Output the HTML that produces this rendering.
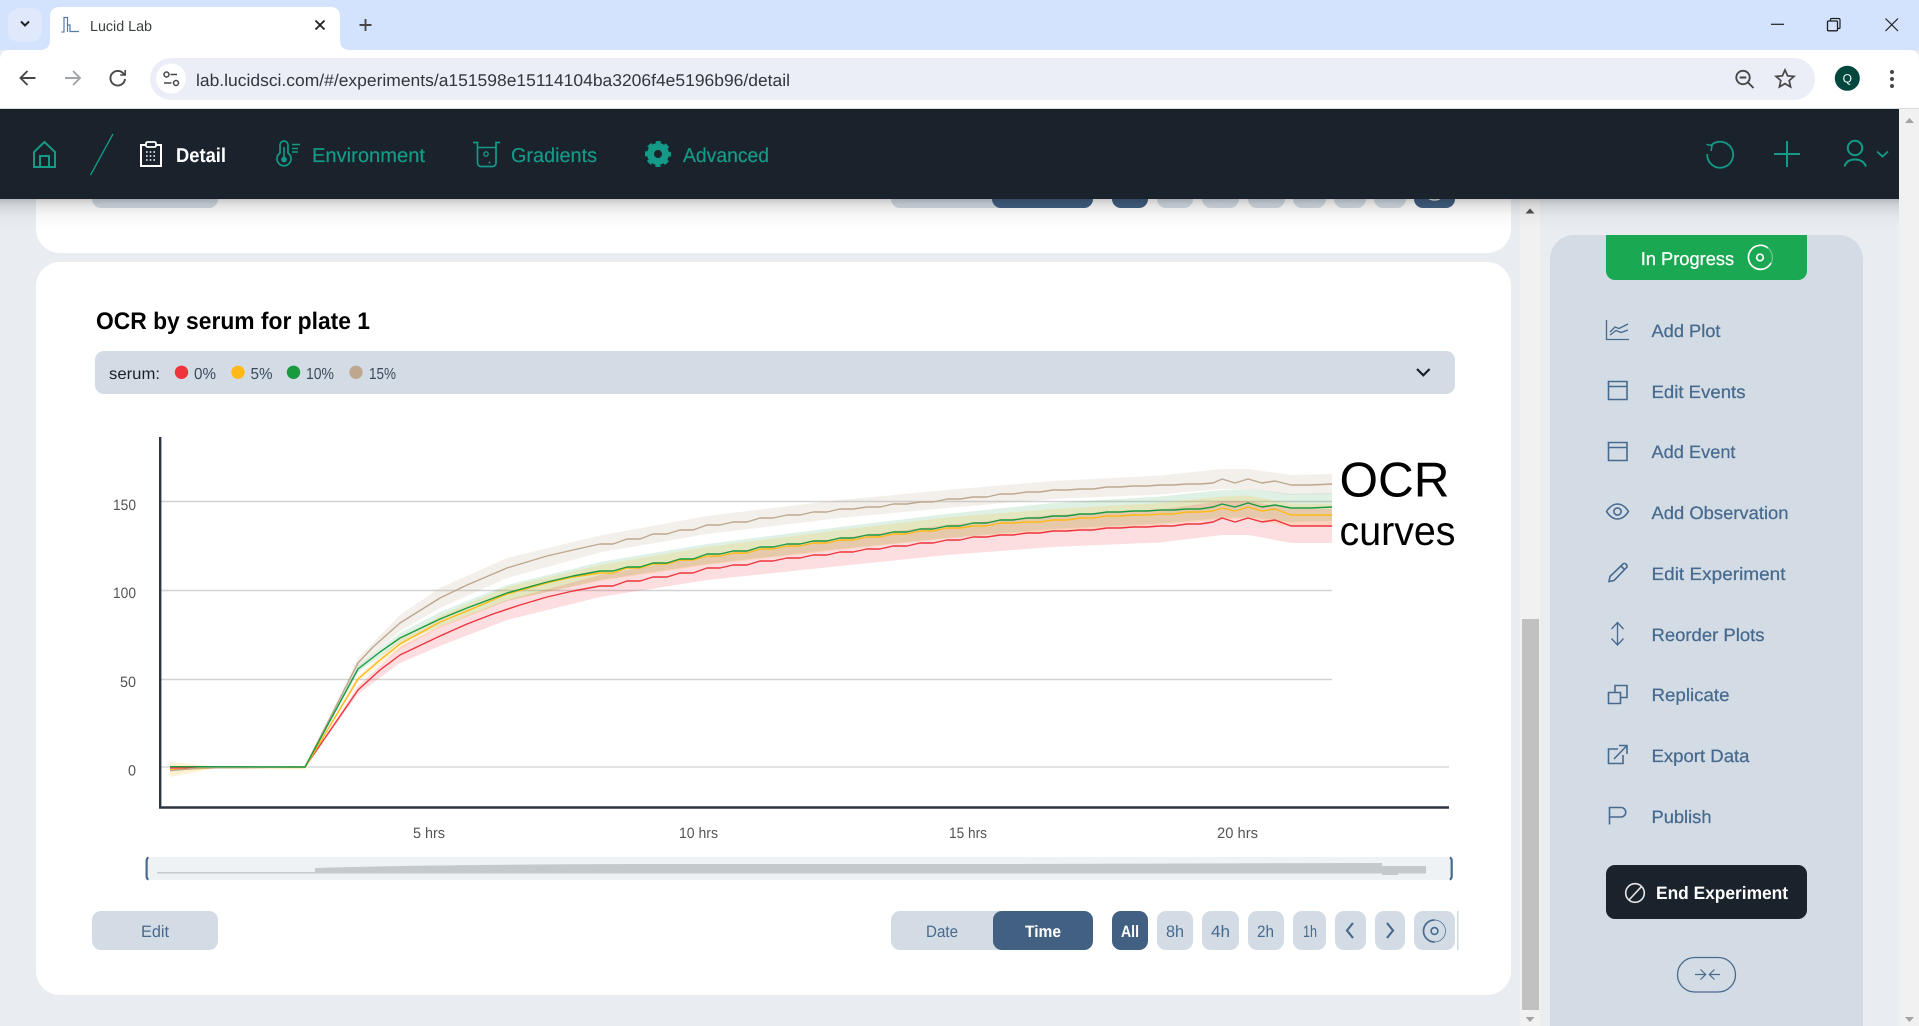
<!DOCTYPE html>
<html lang="en">
<head>
<meta charset="utf-8">
<title>Lucid Lab</title>
<style>
html,body{margin:0;padding:0;background:#e9edf2;overflow:hidden}
svg{display:block}
text{font-family:"Liberation Sans",Arial,sans-serif;text-rendering:geometricPrecision}
.side{font-size:18px;fill:#476a8e;stroke:#476a8e;stroke-width:.25}
.nav{font-size:20px;fill:#149a87;stroke:#149a87;stroke-width:.2}
.btn{font-size:16.5px;fill:#476a8e}
.ax{font-size:15px;fill:#555}
.lg{font-size:16px;fill:#3b4a5c}
.ic{fill:none;stroke:#476a8e;stroke-width:1.6}
.tl{fill:none;stroke:#149a87;stroke-width:2}
.ch{fill:none;stroke:#474747;stroke-width:1.9}
</style>
</head>
<body>
<svg xmlns="http://www.w3.org/2000/svg" width="1919" height="1026" viewBox="0 0 1919 1026">
<defs>
<linearGradient id="sh" x1="0" y1="0" x2="0" y2="1">
<stop offset="0" stop-color="#000" stop-opacity=".22"/>
<stop offset=".2" stop-color="#000" stop-opacity=".11"/>
<stop offset=".55" stop-color="#000" stop-opacity=".03"/>
<stop offset="1" stop-color="#000" stop-opacity="0"/>
</linearGradient>
</defs>

<!-- page -->
<rect width="1919" height="1026" fill="#e9edf2"/>

<!-- first card -->
<rect x="36" y="120" width="1475" height="133" rx="24" fill="#fff"/>
<rect x="92" y="169" width="126" height="39" rx="9" fill="#d3dce5"/>
<rect x="891" y="169" width="202" height="39" rx="9" fill="#d3dce5"/>
<rect x="992" y="169" width="101" height="39" rx="9" fill="#416082"/>
<rect x="1112" y="169" width="36" height="39" rx="9" fill="#416082"/>
<rect x="1157" y="169" width="36" height="39" rx="9" fill="#d3dce5"/>
<rect x="1202" y="169" width="37" height="39" rx="9" fill="#d3dce5"/>
<rect x="1248" y="169" width="37" height="39" rx="9" fill="#d3dce5"/>
<rect x="1293" y="169" width="33" height="39" rx="9" fill="#d3dce5"/>
<rect x="1334" y="169" width="32" height="39" rx="9" fill="#d3dce5"/>
<rect x="1374" y="169" width="32" height="39" rx="9" fill="#d3dce5"/>
<rect x="1414" y="169" width="41" height="39" rx="9" fill="#416082"/>
<circle cx="1434.5" cy="189" r="11" fill="none" stroke="#e8e8e8" stroke-width="1.5"/>

<!-- second card -->
<rect x="36" y="262" width="1475" height="733" rx="24" fill="#fff"/>
<text x="96" y="329" font-size="24" font-weight="700" fill="#000" textLength="274" lengthAdjust="spacingAndGlyphs">OCR by serum for plate 1</text>

<!-- legend -->
<rect x="95" y="351" width="1360" height="43" rx="9" fill="#d3dce5"/>
<text x="109" y="379" font-size="16" fill="#1a222c" textLength="51" lengthAdjust="spacingAndGlyphs">serum:</text>
<circle cx="181.5" cy="372.3" r="6.7" fill="#f0343c"/>
<text class="lg" x="194" y="379" textLength="22" lengthAdjust="spacingAndGlyphs">0%</text>
<circle cx="238" cy="372.3" r="6.7" fill="#ffb91a"/>
<text class="lg" x="250.5" y="379" textLength="22" lengthAdjust="spacingAndGlyphs">5%</text>
<circle cx="293.5" cy="372.3" r="6.7" fill="#1a9a3f"/>
<text class="lg" x="306" y="379" textLength="28" lengthAdjust="spacingAndGlyphs">10%</text>
<circle cx="356" cy="372.3" r="6.7" fill="#bda88f"/>
<text class="lg" x="369" y="379" textLength="27" lengthAdjust="spacingAndGlyphs">15%</text>
<path d="M1417 369l6.3 6.3 6.3-6.3" fill="none" stroke="#1a222c" stroke-width="2.2"/>

<!-- chart grid -->
<path d="M161 501.5H1332M161 590.5H1332M161 679.5H1332" stroke="#d2d2d2" stroke-width="1.4" fill="none"/>
<path d="M161 767H1449" stroke="#dcdcdc" stroke-width="1.6" fill="none"/>

<!-- bands -->
<polygon fill="#ffb91a" fill-opacity=".2" points="170,762 215,766.5 305,767 215,768 170,777"/>
<polygon fill="#bda88f" fill-opacity=".18" points="305,767 358,658 400,615 440,588 507,558 600,535.5 707,516 840,500 947,490 1053,481 1160,475.5 1222,469 1248,469 1291,475 1332,474 1332,494 1291,495 1248,489 1222,489 1160,494.5 1053,499 947,508 840,518 707,534 600,552.5 507,578 440,608 400,631 358,668"/>
<polygon fill="#1a9a3f" fill-opacity=".14" points="305,767 358,666 400,633 440,612 507,585 600,562 707,544 840,527 947,514 1053,503 1160,496.5 1222,490 1248,489 1291,494 1332,493 1332,521 1291,522 1248,517 1222,518 1160,523.5 1053,529 947,538 840,549 707,564 600,580 507,601 440,626 400,643 358,672"/>
<polygon fill="#ffb91a" fill-opacity=".18" points="305,767 358,676 400,639 440,616 507,587 600,565 707,547 840,530 947,517.5 1053,509 1160,503 1222,496.5 1248,495.5 1291,503.5 1332,503.5 1332,526.5 1291,526.5 1248,518.5 1222,519.5 1160,525 1053,531 947,538.5 840,550 707,565 600,581 507,601 440,628 400,649 358,682"/>
<polygon fill="#f0343c" fill-opacity=".16" points="305,767 358,686 400,647 440,626 507,600 600,575 707,556 840,538 947,525 1053,515 1160,509.5 1222,501 1248,501 1291,509 1332,509 1332,543 1291,543 1248,535 1222,535 1160,542.5 1053,547 947,555 840,566 707,580 600,597 507,620 440,646 400,663 358,694"/>

<!-- lines -->
<g fill="none" stroke-width="1.4" stroke-linejoin="round">
<path stroke="#f0343c" d="M170 768L305 767L358 690L380 670L400 655L440 636L467 624L493 614L520 605L547 597L573 591L600 586H613L627 581H640L653 577H667L680 573H693L707 568H720L733 565H747L760 561H773L787 558H800L813 555H827L840 552H853L867 549H880L893 546H907L920 543H933L947 540H960L973 537H987L1000 535H1013L1027 533H1040L1053 531H1067L1080 530H1093L1107 528H1120L1133 527H1147L1160 526H1173L1187 524H1200L1213 522L1222 518L1235 522L1248 518L1262 522L1275 520L1291 526H1311L1332 526"/>
<path stroke="#ffb91a" d="M170 770L220 767.5L305 767.5L358 679L380 660L400 644L440 622L467 611L507 594L547 583L573 577L600 573H613L627 568H640L653 564H667L680 560H693L707 556H720L733 553H747L760 549H773L787 546H800L813 543H827L840 540H853L867 537H880L893 534H907L920 531H933L947 528H960L973 526H987L1000 523H1013L1027 522H1040L1053 520H1067L1080 518H1093L1107 516H1120L1133 515H1147L1160 514H1173L1187 512H1200L1213 511L1222 508L1235 511L1248 507L1262 511L1275 509L1291 515H1311L1332 515"/>
<path stroke="#bda88f" d="M170 770.7L200 768L305 767L358 663L373 647L400 623L440 598L467 585L507 568L547 556L573 550L600 544H613L627 539H640L653 534H667L680 530H693L707 525H720L733 522H747L760 518H773L787 515H800L813 512H827L840 509H853L867 507H880L893 504H907L920 502H933L947 499H960L973 497H987L1000 494H1013L1027 492H1040L1053 490H1067L1080 489H1093L1107 487H1120L1133 486H1147L1160 485H1173L1187 484H1200L1213 483L1222 479L1235 483L1248 479L1262 483L1275 481L1291 485H1311L1332 484"/>
<path stroke="#1a9a3f" d="M170 766.7H200L305 767L358 669L380 652L400 638L440 619L467 608L507 593L547 582L573 576L600 571H613L627 567H640L653 563H667L680 559H693L707 554H720L733 551H747L760 547H773L787 544H800L813 541H827L840 538H853L867 535H880L893 532H907L920 529H933L947 526H960L973 523H987L1000 520H1013L1027 518H1040L1053 516H1067L1080 514H1093L1107 512H1120L1133 511H1147L1160 510H1173L1187 509H1200L1213 507L1222 504L1235 507L1248 503L1262 507L1275 505L1291 508H1311L1332 507"/>
</g>

<!-- axes -->
<path d="M160.2 437V807.5H1449" fill="none" stroke="#2b3543" stroke-width="2.4"/>
<text class="ax" x="113" y="510" textLength="23" lengthAdjust="spacingAndGlyphs">150</text>
<text class="ax" x="113" y="598" textLength="23" lengthAdjust="spacingAndGlyphs">100</text>
<text class="ax" x="120" y="687" textLength="16" lengthAdjust="spacingAndGlyphs">50</text>
<text class="ax" x="128" y="775.5" textLength="8" lengthAdjust="spacingAndGlyphs">0</text>
<text class="ax" x="413" y="838" textLength="32" lengthAdjust="spacingAndGlyphs">5 hrs</text>
<text class="ax" x="679" y="838" textLength="39" lengthAdjust="spacingAndGlyphs">10 hrs</text>
<text class="ax" x="949" y="838" textLength="38" lengthAdjust="spacingAndGlyphs">15 hrs</text>
<text class="ax" x="1217" y="838" textLength="41" lengthAdjust="spacingAndGlyphs">20 hrs</text>

<!-- annotation -->
<text x="1339.5" y="496.5" font-size="49" fill="#000" textLength="110" lengthAdjust="spacingAndGlyphs">OCR</text>
<text x="1339.5" y="545" font-size="41" fill="#000" textLength="116" lengthAdjust="spacingAndGlyphs">curves</text>

<!-- brush -->
<rect x="147" y="857" width="1304" height="23" fill="#eef2f5"/>
<path d="M157 872H315V868C400 865.5 500 864.5 640 864H1000L1382 863V866H1426V873.5H1398V875H1382V873.5H315L157 873.5Z" fill="#c4c9cc"/>
<path d="M148.5 857.5C147 858 146.6 859 146.6 861V876C146.6 878 147 879 148.5 879.5" fill="none" stroke="#476a8e" stroke-width="2.2"/>
<path d="M1449.8 857.5C1451.3 858 1451.7 859 1451.7 861V876C1451.7 878 1451.3 879 1449.8 879.5" fill="none" stroke="#476a8e" stroke-width="2.2"/>

<!-- bottom controls -->
<rect x="92" y="911" width="126" height="39" rx="9" fill="#d3dce5"/>
<text class="btn" x="141" y="937" textLength="28" lengthAdjust="spacingAndGlyphs">Edit</text>
<rect x="891" y="911" width="202" height="39" rx="9" fill="#d3dce5"/>
<rect x="993" y="911" width="100" height="39" rx="9" fill="#416082"/>
<text class="btn" x="926" y="937" textLength="32" lengthAdjust="spacingAndGlyphs">Date</text>
<text class="btn" x="1025" y="937" font-weight="700" style="fill:#fff" textLength="36" lengthAdjust="spacingAndGlyphs">Time</text>
<rect x="1112" y="911" width="36" height="39" rx="9" fill="#416082"/>
<text class="btn" x="1121" y="937" font-weight="700" style="fill:#fff" textLength="18" lengthAdjust="spacingAndGlyphs">All</text>
<rect x="1157" y="911" width="36" height="39" rx="9" fill="#d3dce5"/>
<text class="btn" x="1166" y="937" textLength="18" lengthAdjust="spacingAndGlyphs">8h</text>
<rect x="1202" y="911" width="37" height="39" rx="9" fill="#d3dce5"/>
<text class="btn" x="1211" y="937" textLength="19" lengthAdjust="spacingAndGlyphs">4h</text>
<rect x="1248" y="911" width="36" height="39" rx="9" fill="#d3dce5"/>
<text class="btn" x="1257" y="937" textLength="17" lengthAdjust="spacingAndGlyphs">2h</text>
<rect x="1293" y="911" width="33" height="39" rx="9" fill="#d3dce5"/>
<text class="btn" x="1303" y="937" textLength="14" lengthAdjust="spacingAndGlyphs">1h</text>
<rect x="1335" y="911" width="31" height="39" rx="9" fill="#d3dce5"/>
<path d="M1353 923l-6 7.5 6 7.5" fill="none" stroke="#476a8e" stroke-width="2.2"/>
<rect x="1375" y="911" width="30" height="39" rx="9" fill="#d3dce5"/>
<path d="M1387 923l6 7.5-6 7.5" fill="none" stroke="#476a8e" stroke-width="2.2"/>
<rect x="1414" y="911" width="41" height="39" rx="9" fill="#d3dce5"/>
<path d="M1434.5 920A11 11 0 0 0 1434.5 942" fill="none" stroke="#476a8e" stroke-width="1.7"/>
<path d="M1434.5 942A11 11 0 0 0 1434.5 920" fill="none" stroke="#476a8e" stroke-width=".7"/>
<circle cx="1434.5" cy="931" r="3.4" fill="none" stroke="#476a8e" stroke-width="1.6"/>
<rect x="1457" y="911" width="1.6" height="39" fill="#d3dce5"/>

<!-- inner scrollbar -->
<rect x="1520" y="199" width="20" height="827" fill="#f1f1f1"/>
<rect x="1522" y="619" width="17" height="391" fill="#c1c1c1"/>
<polygon points="1525.5,213.5 1534.5,213.5 1530,208.5" fill="#505050"/>
<polygon points="1525.5,1017 1534.5,1017 1530,1022" fill="#a3a3a3"/>

<!-- sidebar -->
<path d="M1550 1026V259A24 24 0 0 1 1574 235H1839A24 24 0 0 1 1863 259V1026Z" fill="#d3dce5"/>
<path d="M1606 235H1807V271A9 9 0 0 1 1798 280H1615A9 9 0 0 1 1606 271Z" fill="#1aa952"/>
<text x="1640.7" y="265" font-size="18.5" fill="#fff" stroke="#fff" stroke-width=".25" textLength="93.5" lengthAdjust="spacingAndGlyphs">In Progress</text>
<path d="M1768 248A12 12 0 1 0 1771 263" fill="none" stroke="#fff" stroke-width="1.7"/>
<path d="M1768 248A12 12 0 0 1 1771 263" fill="none" stroke="#fff" stroke-opacity=".35" stroke-width="1.3"/>
<circle cx="1760" cy="257.5" r="3.3" fill="none" stroke="#fff" stroke-width="1.7"/>

<text class="side" x="1651.5" y="337" textLength="69" lengthAdjust="spacingAndGlyphs">Add Plot</text>
<text class="side" x="1651.5" y="398" textLength="94" lengthAdjust="spacingAndGlyphs">Edit Events</text>
<text class="side" x="1651.5" y="458" textLength="84" lengthAdjust="spacingAndGlyphs">Add Event</text>
<text class="side" x="1651.5" y="519" textLength="137" lengthAdjust="spacingAndGlyphs">Add Observation</text>
<text class="side" x="1651.5" y="580" textLength="134" lengthAdjust="spacingAndGlyphs">Edit Experiment</text>
<text class="side" x="1651.5" y="641" textLength="113" lengthAdjust="spacingAndGlyphs">Reorder Plots</text>
<text class="side" x="1651.5" y="701" textLength="78" lengthAdjust="spacingAndGlyphs">Replicate</text>
<text class="side" x="1651.5" y="762" textLength="98" lengthAdjust="spacingAndGlyphs">Export Data</text>
<text class="side" x="1651.5" y="823" textLength="60" lengthAdjust="spacingAndGlyphs">Publish</text>

<path class="ic" style="stroke-width:1.3" d="M1606.5 320V339.5H1629M1610 332L1615 327L1619 328.5L1628 324M1610 335L1616 330.5L1621 332.5L1628 330"/>
<path class="ic" d="M1608.5 381.5H1627V399.5H1608.5ZM1608.5 386.5H1627"/>
<path class="ic" d="M1608.5 442.5H1627V460.5H1608.5ZM1608.5 447.5H1627"/>
<path class="ic" d="M1606.5 511.5C1610 506 1613.5 504 1617.5 504S1625 506 1628.5 511.5C1625 517 1621.5 519 1617.5 519S1610 517 1606.5 511.5Z"/>
<circle class="ic" cx="1617.5" cy="511.5" r="3.6"/>
<path class="ic" d="M1609 581.5L1610 576.5L1623 564A2 2 0 0 1 1625.8 564L1626.5 564.8A2 2 0 0 1 1626.5 567.6L1614 580.5ZM1621 566L1624.8 569.8"/>
<path class="ic" style="stroke-width:1.3" d="M1617.5 623V644M1611.5 629L1617.5 622.5L1623.5 629M1611.5 638.5L1617.5 645L1623.5 638.5"/>
<path class="ic" d="M1608.5 692.5H1620.5V703.5H1608.5ZM1615 692V685.5H1627V697.5H1620.5"/>
<path class="ic" d="M1618 749H1608.5V763.5H1623V755M1614 759L1626.5 746M1619 745.5H1627V754"/>
<path class="ic" d="M1609.5 824.5V807.5H1621A4.7 4.7 0 0 1 1621 817H1609.5"/>

<rect x="1606" y="865" width="201" height="54" rx="9" fill="#1a222c"/>
<circle cx="1635" cy="893" r="9.3" fill="none" stroke="#e6e6e6" stroke-width="1.6"/>
<path d="M1629 900L1641.5 886.5" stroke="#e6e6e6" stroke-width="1.6"/>
<text x="1656" y="899" font-size="18" font-weight="700" fill="#fff" textLength="132" lengthAdjust="spacingAndGlyphs">End Experiment</text>

<rect x="1677.5" y="957.5" width="58" height="34.5" rx="17.2" fill="none" stroke="#476a8e" stroke-width="1.3"/>
<path d="M1695 974.5H1705.7M1700.5 969.5L1705.7 974.5L1700.5 979.5M1720 974.5H1709.3M1714.5 969.5L1709.3 974.5L1714.5 979.5" fill="none" stroke="#476a8e" stroke-width="1.2"/>

<!-- main scrollbar -->
<rect x="1899" y="109" width="20" height="917" fill="#f1f1f1"/>
<polygon points="1905,123 1914,123 1909.5,118" fill="#a3a3a3"/>
<polygon points="1905,1017 1914,1017 1909.5,1022" fill="#a3a3a3"/>

<!-- header shadow -->
<rect x="0" y="199" width="1899" height="30" fill="url(#sh)"/>

<!-- header -->
<rect x="0" y="109" width="1899" height="90" fill="#1a222c"/>
<path class="tl" d="M34 167V152L44.5 142L55 152V167ZM40 167V156H49V167"/>
<path d="M113 134L90.5 175" stroke="#149a87" stroke-width="1.3" fill="none"/>

<path d="M146 145H141V166H161V145H156" fill="none" stroke="#fff" stroke-width="2"/>
<rect x="146" y="142" width="10" height="5" rx="1.5" fill="none" stroke="#fff" stroke-width="1.8"/>
<path d="M146 152H156M146 156H156M146 160H156" stroke="#fff" stroke-width="1.6" stroke-dasharray="1.6 2.1" fill="none"/>
<text x="176" y="162" font-size="20" font-weight="700" fill="#fff" textLength="50" lengthAdjust="spacingAndGlyphs">Detail</text>

<path class="tl" style="stroke-width:1.7" d="M280 153V145A4 4 0 0 1 288 145V153A7 7 0 1 1 280 153Z"/>
<circle cx="284" cy="159.5" r="2.8" fill="#149a87"/>
<path d="M284 158V147" stroke="#149a87" stroke-width="1.6"/>
<path d="M292 144.5H300M292 148.5H298M292 152H298" stroke="#149a87" stroke-width="1.4" fill="none"/>
<text class="nav" x="312" y="162" textLength="113" lengthAdjust="spacingAndGlyphs">Environment</text>

<path class="tl" style="stroke-width:1.7" d="M473 142.5H477.5V163A3.5 3.5 0 0 0 481 166.5H492.5A3.5 3.5 0 0 0 496 163V142.5H500"/>
<path d="M478 147.5H495.5" stroke="#149a87" stroke-width="1.6" fill="none"/>
<circle cx="486" cy="154" r="2.2" fill="none" stroke="#149a87" stroke-width="1.3"/>
<circle cx="489.5" cy="162.5" r="1" fill="#149a87"/>
<text class="nav" x="511" y="162" textLength="86" lengthAdjust="spacingAndGlyphs">Gradients</text>

<circle cx="658" cy="154" r="7.5" fill="none" stroke="#149a87" stroke-width="7"/>
<circle cx="658" cy="154" r="11" fill="none" stroke="#149a87" stroke-width="4" stroke-dasharray="4.8 3.84" stroke-dashoffset="2.4"/>
<text class="nav" x="683" y="162" textLength="86" lengthAdjust="spacingAndGlyphs">Advanced</text>

<path d="M1711 145.5A13 13 0 1 1 1707.2 154" fill="none" stroke="#149a87" stroke-width="1.8"/>
<path d="M1706.5 144.5L1712 145.5L1711 151" fill="none" stroke="#149a87" stroke-width="1.6"/>
<path d="M1787 141V167M1774 154H1800" stroke="#149a87" stroke-width="2" fill="none"/>
<circle cx="1855" cy="148" r="7.2" fill="none" stroke="#149a87" stroke-width="2"/>
<path d="M1844.5 166.5C1846 161.5 1850 159.5 1855 159.5S1864 161.5 1866 166.5" fill="none" stroke="#149a87" stroke-width="2"/>
<path d="M1877 151.5L1882.5 156.5L1888 151.5" fill="none" stroke="#149a87" stroke-width="1.8"/>

<!-- browser tab strip -->
<rect x="0" y="0" width="1919" height="50" fill="#d3e3fd"/>
<rect x="8" y="8" width="34" height="34" rx="11" fill="#e0e9fb"/>
<path d="M21 21.5L25 25.5L29 21.5" fill="none" stroke="#1f1f1f" stroke-width="2"/>
<path d="M40 50Q50 50 50 40V17Q50 7 60 7H330Q340 7 340 17V40Q340 50 350 50Z" fill="#fff"/>
<path d="M61.5 32H64V17.5H67.5V32M67.5 25H70V31.5H79" fill="none" stroke="#5b7aa0" stroke-width="1.2"/>
<text x="90" y="31" font-size="14.5" fill="#3c4043" textLength="62" lengthAdjust="spacingAndGlyphs">Lucid Lab</text>
<path d="M315.5 20.5L324.5 29.5M324.5 20.5L315.5 29.5" stroke="#1f1f1f" stroke-width="1.8" fill="none"/>
<path d="M365.5 19V31M359.5 25H371.5" stroke="#474747" stroke-width="1.9" fill="none"/>
<path d="M1771 24.3H1784" stroke="#1f1f1f" stroke-width="1.2"/>
<rect x="1827.5" y="21" width="10" height="9.8" rx="1" fill="none" stroke="#1f1f1f" stroke-width="1.3"/>
<path d="M1830.5 21V19.5Q1830.5 18.5 1831.5 18.5H1838.5Q1840 18.5 1840 20V27.5Q1840 28.5 1839 28.5H1837.5" fill="none" stroke="#1f1f1f" stroke-width="1.2"/>
<path d="M1885.5 18.5L1898 31M1898 18.5L1885.5 31" stroke="#1f1f1f" stroke-width="1.2" fill="none"/>

<!-- toolbar -->
<path d="M0 60Q0 50 10 50H1909Q1919 50 1919 60V108H0Z" fill="#fff"/>
<rect x="0" y="108" width="1919" height="1" fill="#d8dadd"/>
<path class="ch" d="M35.5 78H20.5M27.5 71L20.5 78L27.5 85"/>
<path d="M65 78H80M73 71L80 78L73 85" fill="none" stroke="#a0a4a8" stroke-width="1.9"/>
<path class="ch" d="M124 74.5A7.3 7.3 0 1 0 125 79"/>
<path class="ch" style="stroke-width:1.6" d="M125.2 70V75H120.2"/>
<rect x="150" y="58" width="1665" height="42" rx="21" fill="#ebeef7"/>
<circle cx="171" cy="78.5" r="15" fill="#fff"/>
<circle cx="166.5" cy="74.5" r="2.5" fill="none" stroke="#474747" stroke-width="1.5"/>
<circle cx="176" cy="83" r="2.5" fill="none" stroke="#474747" stroke-width="1.5"/>
<path d="M170.5 74.5H177M164 83H171.5" stroke="#474747" stroke-width="1.5" fill="none"/>
<text x="196" y="86" font-size="17" fill="#33363a" textLength="594" lengthAdjust="spacingAndGlyphs">lab.lucidsci.com/#/experiments/a151598e15114104ba3206f4e5196b96/detail</text>
<circle cx="1743" cy="77.5" r="6.7" class="ch"/>
<path class="ch" d="M1739.7 77.5H1746.3M1748 82.5L1753.5 88"/>
<polygon class="ch" style="stroke-width:1.7" points="1785,70 1787.6,75.8 1794,76.4 1789.2,80.6 1790.6,86.9 1785,83.6 1779.4,86.9 1780.8,80.6 1776,76.4 1782.4,75.8"/>
<circle cx="1847.3" cy="78.3" r="12.5" fill="#00483e"/>
<text x="1847.3" y="82.5" font-size="12" fill="#fff" text-anchor="middle">Q</text>
<circle cx="1892" cy="72" r="2" fill="#474747"/>
<circle cx="1892" cy="79" r="2" fill="#474747"/>
<circle cx="1892" cy="86" r="2" fill="#474747"/>
</svg>
</body>
</html>
